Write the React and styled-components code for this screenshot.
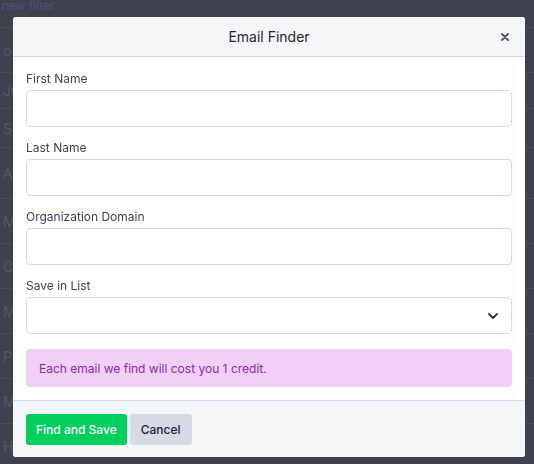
import React from "react";
import styled, { createGlobalStyle } from "styled-components";

const GlobalStyle = createGlobalStyle`
  html, body {
    margin: 0;
    padding: 0;
    height: 100%;
    overflow: hidden;
  }
  body {
    font-family: "Inter", "Noto Sans", sans-serif;
    background: #3f414f;
  }
  * {
    box-sizing: border-box;
  }
`;

const Page = styled.div`
  height: 464px;
  background: #3f414f;
  color: #555868;
  font-size: 14px;
`;

const PageTop = styled.div`
  height: 27px;
  display: flex;
  align-items: flex-start;
  color: #4b5380;
  font-size: 12px;
  line-height: 12px;
  padding-left: 2px;
`;

const Row = styled.div`
  height: ${(p) => p.h}px;
  border-top: 1px solid #4a4c5a;
  display: flex;
  align-items: center;
  padding-left: ${(p) => p.indent || 3}px;
`;

const Overlay = styled.div`
  position: fixed;
  inset: 0;
  padding: 17px 0 0 13px;
`;

const Modal = styled.div`
  width: 512px;
  background: #fff;
  border-radius: 3px;
  overflow: hidden;
  display: flex;
  flex-direction: column;
`;

const Header = styled.div`
  height: 40px;
  background: #f5f6f8;
  border-bottom: 1px solid #d7dbe6;
  display: flex;
  align-items: center;
  justify-content: center;
  position: relative;
`;

const Title = styled.h2`
  margin: 0;
  font-size: 14px;
  font-weight: 400;
  color: #1f2433;
`;

const CloseButton = styled.button`
  position: absolute;
  right: 15px;
  top: 15px;
  width: 10px;
  height: 10px;
  padding: 0;
  border: 0;
  background: none;
  display: flex;
  align-items: center;
  justify-content: center;
  cursor: pointer;
`;

const Body = styled.div`
  padding: 13px;
  display: flex;
  flex-direction: column;
  gap: 12px;
`;

const Field = styled.div`
  display: flex;
  flex-direction: column;
  gap: 3px;
`;

const Label = styled.label`
  font-size: 12px;
  line-height: 17px;
  color: #3b4256;
`;

const Input = styled.input`
  height: 37px;
  border: 1px solid #d4d8e4;
  border-radius: 4px;
  background: #fff;
  outline: none;
  padding: 0 12px;
  font-family: inherit;
  font-size: 13px;
`;

const SelectBox = styled.div`
  height: 37px;
  border: 1px solid #d4d8e4;
  border-radius: 4px;
  background: #fff;
  display: flex;
  align-items: center;
  justify-content: flex-end;
  padding: 0 13px;
`;

const Alert = styled.div`
  margin-top: 3px;
  height: 38px;
  background: #efd1f5;
  color: #9324b0;
  border-radius: 4px;
  display: flex;
  align-items: center;
  padding: 0 13px;
  font-size: 12px;
`;

const Footer = styled.div`
  background: #f5f6f8;
  border-top: 1px solid #d7dbe6;
  padding: 13px 13px 12px;
  display: flex;
  gap: 3px;
`;

const Button = styled.button`
  height: 31px;
  padding: 0 ${(p) => (p.primary ? 10 : 11)}px;
  border: 0;
  border-radius: 3px;
  font-family: inherit;
  font-size: 12px;
  font-weight: 500;
  background: ${(p) => (p.primary ? "#00cf5e" : "#d5dae5")};
  color: ${(p) => (p.primary ? "#fff" : "#1f2433")};
  cursor: pointer;
`;

const rows = [
  { h: 45, t: "osp", indent: 0 },
  { h: 36, t: "JO" },
  { h: 39, t: "Sc" },
  { h: 51, t: "As" },
  { h: 45, t: "M" },
  { h: 45, t: "Cl" },
  { h: 45, t: "M" },
  { h: 45, t: "Pr" },
  { h: 45, t: "M" },
  { h: 45, t: "H" },
];

const fields = ["First Name", "Last Name", "Organization Domain"];

export default function App() {
  return (
    <>
      <GlobalStyle />
      <Page>
        <PageTop>new filter</PageTop>
        {rows.map((r, i) => (
          <Row key={i} h={r.h} indent={r.indent}>
            {r.t}
          </Row>
        ))}
      </Page>
      <Overlay>
        <Modal>
          <Header>
            <Title>Email Finder</Title>
            <CloseButton aria-label="Close">
              <svg width="8" height="8" viewBox="0 0 8 8">
                <path
                  d="M1 1L7 7M7 1L1 7"
                  stroke="#4b5574"
                  strokeWidth="1.8"
                  strokeLinecap="round"
                />
              </svg>
            </CloseButton>
          </Header>
          <Body>
            {fields.map((f) => (
              <Field key={f}>
                <Label>{f}</Label>
                <Input type="text" />
              </Field>
            ))}
            <Field>
              <Label>Save in List</Label>
              <SelectBox>
                <svg width="10" height="6" viewBox="0 0 10 6">
                  <path
                    d="M1 1L5 5L9 1"
                    fill="none"
                    stroke="#2b3245"
                    strokeWidth="1.8"
                    strokeLinecap="round"
                    strokeLinejoin="round"
                  />
                </svg>
              </SelectBox>
            </Field>
            <Alert>Each email we find will cost you 1 credit.</Alert>
          </Body>
          <Footer>
            <Button primary>Find and Save</Button>
            <Button>Cancel</Button>
          </Footer>
        </Modal>
      </Overlay>
    </>
  );
}
